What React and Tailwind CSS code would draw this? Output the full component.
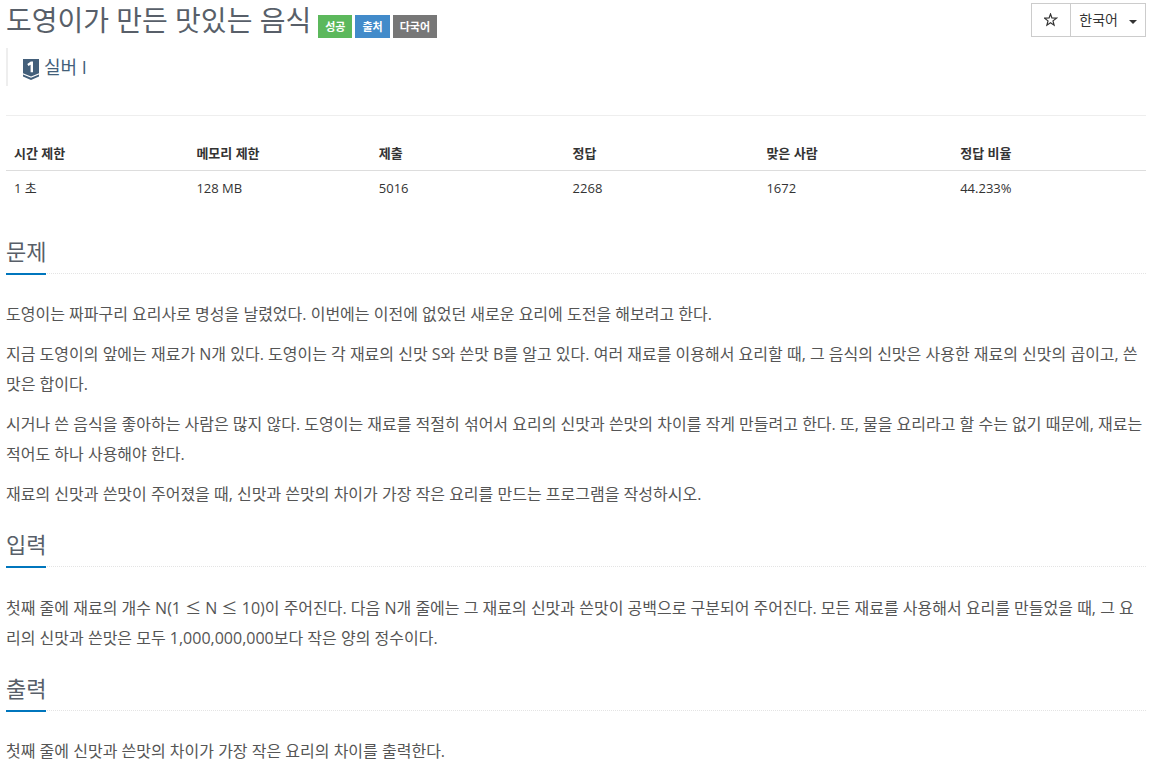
const labels = [
  { text: "성공", className: "bg-[#5cb85c]" },
  { text: "출처", className: "bg-[#428bca]" },
  { text: "다국어", className: "bg-[#777777]" },
];

const info = [
  { name: "시간 제한", value: "1 초", width: "w-[16%]" },
  { name: "메모리 제한", value: "128 MB", width: "w-[16%]" },
  { name: "제출", value: "5016", width: "w-[17%]" },
  { name: "정답", value: "2268", width: "w-[17%]" },
  { name: "맞은 사람", value: "1672", width: "w-[17%]" },
  { name: "정답 비율", value: "44.233%", width: "w-[17%]" },
];

// Tier badge, silver
function TierIcon() {
  return (
    <svg viewBox="0 0 16 21" className="mt-1 h-[21px] w-4" aria-hidden="true">
      <path d="M0 0h16v14.2l-8 3.3-8-3.3z" fill="#435f7a" />
      <path d="M0 15.6l8 3.2 8-3.2v1.9l-8 3.5-8-3.5z" fill="#435f7a" />
      <path d="M4.3 5L7.8 2.6H10v10.7H7.6V5.8L5.4 7z" fill="#fff" />
    </svg>
  );
}

function Section({ title, children }) {
  return (
    <section className="mb-5">
      <div className="mb-[25px] border-b border-dotted border-[#e4e4e4]">
        <h2 className="-mb-[2px] inline-block border-b-2 border-[#0076bd] pb-[6px] align-top text-[22px] leading-[31px] text-[#585f69]">
          {title}
        </h2>
      </div>
      <div className="flex flex-col gap-[10px] break-words text-base leading-[30px] text-[#555555]">
        {children}
      </div>
    </section>
  );
}

function Leq() {
  return <span className="font-['Noto_Sans_CJK_KR',sans-serif]">≤</span>;
}

export default function App() {
  return (
    <main lang="ko" className="bg-white pt-[3px] pr-[10px] pl-[6px] font-['Open_Sans','Noto_Sans_CJK_KR',sans-serif] text-[#333333]">
      <header className="flex items-start justify-between">
        <div className="flex items-end gap-[7px]">
          <h1 className="text-[28px] leading-[35px] text-[#585f69]">도영이가 만든 맛있는 음식</h1>
          <div className="flex gap-[3px]">
            {labels.map((label) => (
              <span
                key={label.text}
                className={`px-[7px] text-[11px] leading-[23px] font-bold text-white ${label.className}`}
              >
                {label.text}
              </span>
            ))}
          </div>
        </div>
        <div className="flex h-[34px] border border-[#cccccc] text-sm">
          <button type="button" aria-label="즐겨찾기" className="flex w-[39px] items-center justify-center border-r border-[#cccccc]">
            <svg viewBox="0 0 14 14" className="size-[14px]" fill="none" stroke="#333" strokeWidth="1.2" aria-hidden="true">
              <path d="M6.5 1l1.4 3.9 4.6.2-3.5 2.8 1.1 4.3-3.6-2.4-3.6 2.4L4 7.9.5 5.1l4.6-.2z" />
            </svg>
          </button>
          <button type="button" className="flex items-center gap-[11px] px-2">
            한국어
            <svg viewBox="0 0 8 4" className="mt-1 h-1 w-2" aria-hidden="true">
              <path d="M0 0h8L4 4z" fill="#333" />
            </svg>
          </button>
        </div>
      </header>

      <blockquote className="mt-[10px] flex h-[38px] items-center gap-[5px] border-l-2 border-[#eeeeee] pl-[15px] text-lg text-[#435f7a]">
        <TierIcon />
        <span>실버 I</span>
      </blockquote>

      <hr className="mt-[29px] border-[#eeeeee]" />

      <table className="mt-5 w-full table-fixed text-left text-[13px] leading-[18px]">
        <thead>
          <tr className="border-b border-[#dddddd]">
            {info.map((item) => (
              <th key={item.name} className={`p-2 font-bold ${item.width}`}>{item.name}</th>
            ))}
          </tr>
        </thead>
        <tbody>
          <tr>
            {info.map((item) => (
              <td key={item.name} className="p-2">{item.value}</td>
            ))}
          </tr>
        </tbody>
      </table>

      <div className="mt-[31px]">
        <Section title="문제">
          <p>도영이는 짜파구리 요리사로 명성을 날렸었다. 이번에는 이전에 없었던 새로운 요리에 도전을 해보려고 한다.</p>
          <p>지금 도영이의 앞에는 재료가 N개 있다. 도영이는 각 재료의 신맛 S와 쓴맛 B를 알고 있다. 여러 재료를 이용해서 요리할 때, 그 음식의 신맛은 사용한 재료의 신맛의 곱이고, 쓴맛은 합이다.</p>
          <p>시거나 쓴 음식을 좋아하는 사람은 많지 않다. 도영이는 재료를 적절히 섞어서 요리의 신맛과 쓴맛의 차이를 작게 만들려고 한다. 또, 물을 요리라고 할 수는 없기 때문에, 재료는 적어도 하나 사용해야 한다.</p>
          <p>재료의 신맛과 쓴맛이 주어졌을 때, 신맛과 쓴맛의 차이가 가장 작은 요리를 만드는 프로그램을 작성하시오.</p>
        </Section>
        <Section title="입력">
          <p>첫째 줄에 재료의 개수 N(1 <Leq /> N <Leq /> 10)이 주어진다. 다음 N개 줄에는 그 재료의 신맛과 쓴맛이 공백으로 구분되어 주어진다. 모든 재료를 사용해서 요리를 만들었을 때, 그 요리의 신맛과 쓴맛은 모두 1,000,000,000보다 작은 양의 정수이다.</p>
        </Section>
        <Section title="출력">
          <p>첫째 줄에 신맛과 쓴맛의 차이가 가장 작은 요리의 차이를 출력한다.</p>
        </Section>
      </div>
    </main>
  );
}
